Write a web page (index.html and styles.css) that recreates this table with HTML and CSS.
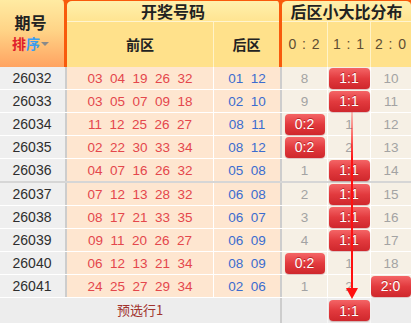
FILE: index.html
```html
<!DOCTYPE html>
<html>
<head>
<meta charset="utf-8">
<link rel="stylesheet" href="styles.css">
</head>
<body>
<div class="board">
  <div class="head">
    <div class="h-period">
      <div class="h-title">期号</div>
      <div class="sort"><span class="s-r">排</span><span class="s-b">序</span><span class="tri"></span></div>
    </div>
    <div class="h-draw">
      <div class="h-top">开奖号码</div>
      <div class="h-sub"><div class="hs-front">前区</div><div class="hs-back">后区</div></div>
    </div>
    <div class="h-dist">
      <div class="h-top">后区小大比分布</div>
      <div class="h-sub ratio"><div class="hd1">0 : 2</div><div class="hd2">1 : 1</div><div class="hd3">2 : 0</div></div>
    </div>
  </div>

  <div class="row"><div class="c-period">26032</div><div class="c-front">03&nbsp;&nbsp;04&nbsp;&nbsp;19&nbsp;&nbsp;26&nbsp;&nbsp;32</div><div class="c-back">01&nbsp;&nbsp;12</div><div class="c-d d1">8</div><div class="c-d d2"><span class="badge">1:1</span></div><div class="c-d d3">10</div></div>
  <div class="row"><div class="c-period">26033</div><div class="c-front">03&nbsp;&nbsp;05&nbsp;&nbsp;07&nbsp;&nbsp;09&nbsp;&nbsp;18</div><div class="c-back">02&nbsp;&nbsp;10</div><div class="c-d d1">9</div><div class="c-d d2"><span class="badge">1:1</span></div><div class="c-d d3">11</div></div>
  <div class="row"><div class="c-period">26034</div><div class="c-front">11&nbsp;&nbsp;12&nbsp;&nbsp;25&nbsp;&nbsp;26&nbsp;&nbsp;27</div><div class="c-back">08&nbsp;&nbsp;11</div><div class="c-d d1"><span class="badge">0:2</span></div><div class="c-d d2">1</div><div class="c-d d3">12</div></div>
  <div class="row"><div class="c-period">26035</div><div class="c-front">02&nbsp;&nbsp;22&nbsp;&nbsp;30&nbsp;&nbsp;33&nbsp;&nbsp;34</div><div class="c-back">08&nbsp;&nbsp;12</div><div class="c-d d1"><span class="badge">0:2</span></div><div class="c-d d2">2</div><div class="c-d d3">13</div></div>
  <div class="row group-end"><div class="c-period">26036</div><div class="c-front">04&nbsp;&nbsp;07&nbsp;&nbsp;16&nbsp;&nbsp;26&nbsp;&nbsp;32</div><div class="c-back">05&nbsp;&nbsp;08</div><div class="c-d d1">1</div><div class="c-d d2"><span class="badge">1:1</span></div><div class="c-d d3">14</div></div>
  <div class="row"><div class="c-period">26037</div><div class="c-front">07&nbsp;&nbsp;12&nbsp;&nbsp;13&nbsp;&nbsp;28&nbsp;&nbsp;32</div><div class="c-back">06&nbsp;&nbsp;08</div><div class="c-d d1">2</div><div class="c-d d2"><span class="badge">1:1</span></div><div class="c-d d3">15</div></div>
  <div class="row"><div class="c-period">26038</div><div class="c-front">08&nbsp;&nbsp;17&nbsp;&nbsp;21&nbsp;&nbsp;33&nbsp;&nbsp;35</div><div class="c-back">06&nbsp;&nbsp;07</div><div class="c-d d1">3</div><div class="c-d d2"><span class="badge">1:1</span></div><div class="c-d d3">16</div></div>
  <div class="row"><div class="c-period">26039</div><div class="c-front">09&nbsp;&nbsp;11&nbsp;&nbsp;20&nbsp;&nbsp;26&nbsp;&nbsp;27</div><div class="c-back">06&nbsp;&nbsp;09</div><div class="c-d d1">4</div><div class="c-d d2"><span class="badge">1:1</span></div><div class="c-d d3">17</div></div>
  <div class="row"><div class="c-period">26040</div><div class="c-front">06&nbsp;&nbsp;12&nbsp;&nbsp;13&nbsp;&nbsp;21&nbsp;&nbsp;34</div><div class="c-back">08&nbsp;&nbsp;09</div><div class="c-d d1"><span class="badge">0:2</span></div><div class="c-d d2">1</div><div class="c-d d3">18</div></div>
  <div class="row"><div class="c-period">26041</div><div class="c-front">24&nbsp;&nbsp;25&nbsp;&nbsp;27&nbsp;&nbsp;29&nbsp;&nbsp;34</div><div class="c-back">02&nbsp;&nbsp;06</div><div class="c-d d1">1</div><div class="c-d d2">2</div><div class="c-d d3"><span class="badge">2:0</span></div></div>

  <div class="foot">
    <div class="f-label">预选行1</div>
    <div class="f-d d1"></div>
    <div class="f-d d2"><span class="badge">1:1</span></div>
    <div class="f-d d3"></div>
  </div>

  <svg class="arrow" width="411" height="323" viewBox="0 0 411 323">
    <defs>
      <linearGradient id="lg" x1="0" y1="112" x2="0" y2="160" gradientUnits="userSpaceOnUse">
        <stop offset="0" stop-color="#ff2020" stop-opacity="0.25"/>
        <stop offset="1" stop-color="#ff1010" stop-opacity="1"/>
      </linearGradient>
    </defs>
    <rect x="351" y="112" width="2" height="178" fill="url(#lg)"/>
    <polygon points="346,288 358,288 352,299" fill="#ff1010"/>
  </svg>
</div>
</body>
</html>
```

FILE: styles.css
```css
* { box-sizing: border-box; }
html, body { margin: 0; padding: 0; background: #fff; }
body { font-family: "Liberation Sans", Arial, "Noto Sans CJK SC", sans-serif; }

.board {
  position: relative;
  width: 411px;
  height: 323px;
  overflow: hidden;
}

/* ---------- header ---------- */
.head {
  display: flex;
  height: 67px;
  background: #f85a0c;
}
.h-period {
  width: 67px;
  border-right: 3px solid #f85a0c;
  border-top-right-radius: 5px;
  background: linear-gradient(#ffeba2 0%, #ffd487 45%, #ffa361 100%);
  display: flex;
  flex-direction: column;
  align-items: center;
  padding-top: 13px;
}
.h-title {
  font-family: "Noto Sans CJK SC", sans-serif;
  font-weight: bold;
  font-size: 16px;
  line-height: 18px;
  height: 18px;
  color: #222;
  padding-right: 3px;
}
.sort {
  display: flex;
  align-items: center;
  margin-top: 5px;
  height: 15px;
  font-family: "Noto Sans CJK SC", sans-serif;
  font-weight: bold;
  font-size: 14px;
  line-height: 15px;
  padding-right: 3px;
}
.s-r { color: #e0202a; }
.s-b { color: #3a9df0; }
.tri {
  width: 0; height: 0;
  margin-left: 1px;
  border-left: 4px solid transparent;
  border-right: 4px solid transparent;
  border-top: 4px solid #8a8a8a;
}

.h-draw {
  width: 215px;
  border-right: 3px solid #f85a0c;
  border-top: 1px solid #f85a0c;
  border-radius: 5px 5px 0 0;
  display: flex;
  flex-direction: column;
  overflow: hidden;
}
.h-dist {
  flex: 1;
  border-top: 1px solid #f85a0c;
  border-radius: 5px 5px 0 0;
  display: flex;
  flex-direction: column;
  overflow: hidden;
}
.h-top {
  height: 21px;
  border-bottom: 1px solid #fff4cf;
  background: linear-gradient(#fff0ad, #ffe491);
  font-family: "Noto Sans CJK SC", sans-serif;
  font-weight: bold;
  font-size: 16px;
  line-height: 20px;
  color: #222;
  text-align: center;
}
.h-sub {
  flex: 1;
  display: flex;
  background: #ffe18b;
  font-family: "Noto Sans CJK SC", sans-serif;
  font-weight: bold;
  font-size: 14px;
  color: #222;
}
.h-sub > div {
  display: flex;
  align-items: center;
  justify-content: center;
  padding-bottom: 1px;
}
.hs-front { width: 147px; border-right: 1px solid #fff3c8; }
.hs-back { flex: 1; }
.ratio {
  font-family: "Liberation Sans", Arial, sans-serif;
  font-weight: normal;
  font-size: 14px;
  letter-spacing: 1px;
  color: #5e4d33;
}
.hd1 { width: 46px; border-right: 1px solid #fff3c8; }
.hd2 { width: 43px; border-right: 1px solid #fff3c8; }
.hd3 { flex: 1; }

/* ---------- rows ---------- */
.row {
  display: flex;
  height: 23px;
  border-bottom: 1px solid #ffffff;
  font-size: 13.5px;
}
.row.group-end {
  height: 24px;
  border-bottom: 2px solid #d6d6d6;
}
.row > div {
  display: flex;
  align-items: center;
  justify-content: center;
  white-space: nowrap;
}
.c-period {
  width: 67px;
  background: #efefef;
  color: #2e2e2e;
  border-right: 2px solid #cdcdcd;
  padding-right: 1px;
  font-size: 14px;
}
.c-front {
  width: 147px;
  background: #fee6d0;
  color: #e4474c;
  border-right: 1px solid #fff;
}
.c-back {
  width: 68px;
  background: #fee6d0;
  color: #3b6ccf;
  border-right: 2px solid #cdcdcd;
}
.c-d {
  background: #f6f0e5;
  color: #a3a3a3;
}
.d1 { width: 46px; border-right: 1px solid #fff; }
.d2 { width: 43px; border-right: 1px solid #fff; }
.d3 { flex: 1; }

.badge {
  display: inline-flex;
  align-items: center;
  justify-content: center;
  width: 41px;
  height: 21px;
  border-radius: 4px;
  background: linear-gradient(#f46566 0%, #e23a3e 50%, #cf272c 100%);
  color: #fff;
  font-family: "Liberation Sans", Arial, sans-serif;
  font-size: 14px;
  text-shadow: 0 -1px 0 rgba(140, 10, 10, 0.6);
  box-shadow: 0 1px 1px rgba(120, 0, 0, 0.25);
}
.d1 .badge { width: 40px; }
.d3 .badge { width: 40px; margin-left: -1px; }

/* ---------- footer ---------- */
.foot {
  display: flex;
  height: 25px;
  background: #ededed;
}
.foot > div {
  display: flex;
  align-items: center;
  justify-content: center;
}
.f-label {
  width: 282px;
  border-right: 2px solid #cdcdcd;
  font-family: "Noto Sans CJK SC", sans-serif;
  font-size: 13px;
  color: #a1332d;
  padding-bottom: 2px;
}
.f-d { background: #ededed; }
.foot .d1, .foot .d2 { border-right: 1px solid #f6f6f6; }

/* ---------- overlay arrow ---------- */
.arrow {
  position: absolute;
  left: 0;
  top: 0;
  pointer-events: none;
}
```
